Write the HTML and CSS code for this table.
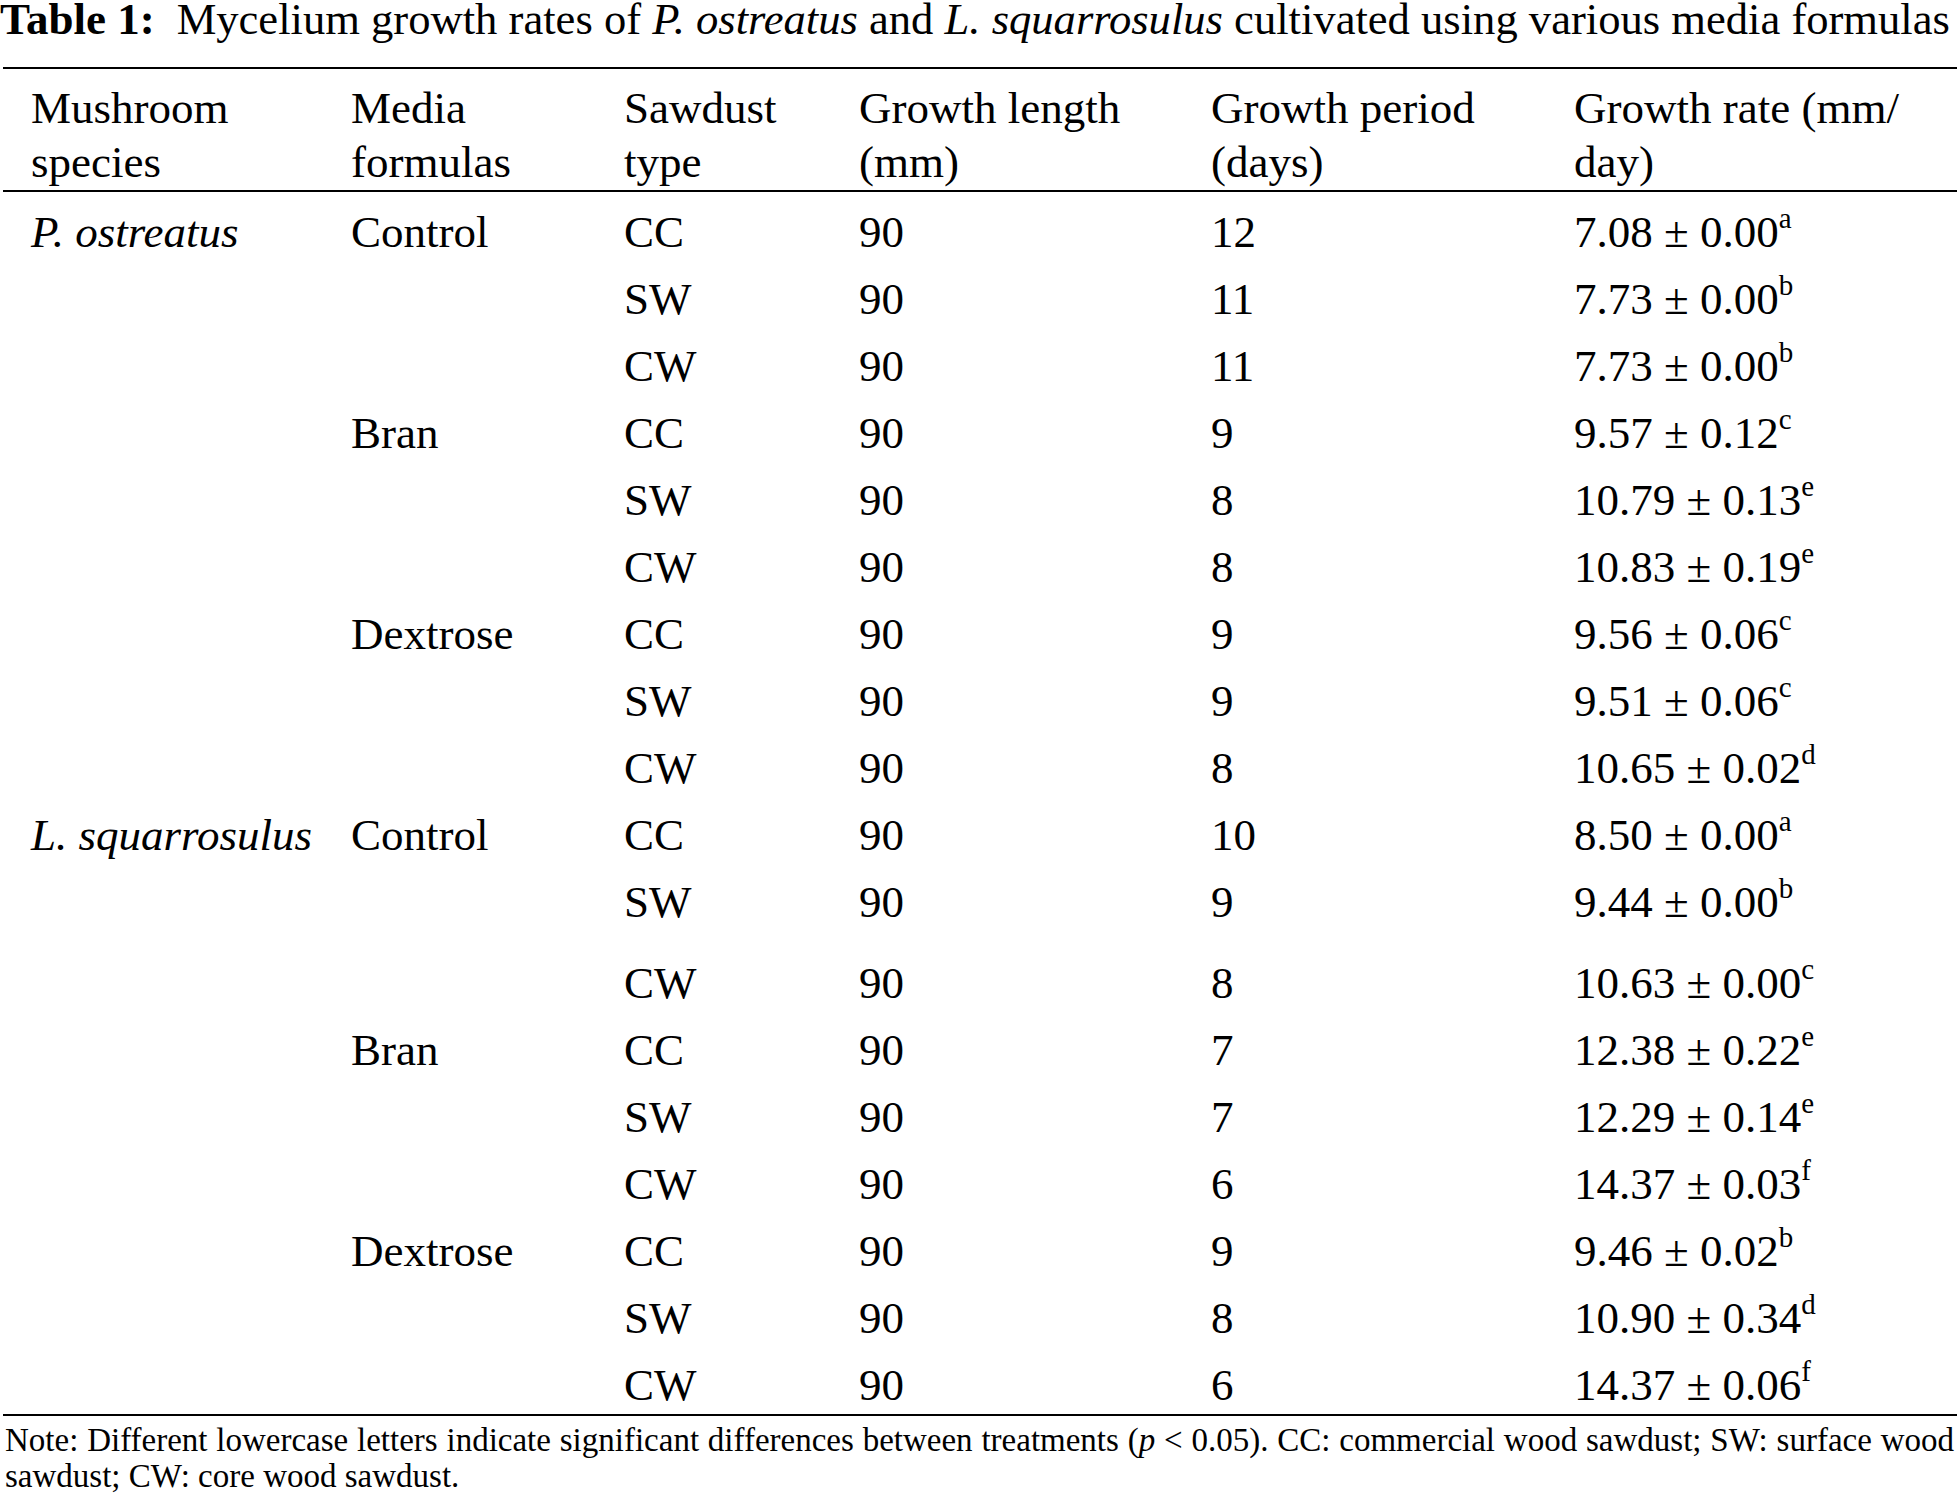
FILE: index.html
```html
<!DOCTYPE html>
<html lang="en">
<head>
<meta charset="utf-8">
<title>Table 1</title>
<link rel="stylesheet" href="styles.css">
</head>
<body>
<div class="page">
  <h1 class="caption"><span class="caption-label">Table 1:</span><span class="caption-text">Mycelium growth rates of <i>P. ostreatus</i> and <i>L. squarrosulus</i> cultivated using various media formulas</span></h1>
  <table class="data">
    <colgroup>
      <col class="c1"><col class="c2"><col class="c3"><col class="c4"><col class="c5"><col class="c6">
    </colgroup>
    <thead>
      <tr>
        <th>Mushroom<br>species</th>
        <th>Media<br>formulas</th>
        <th>Sawdust<br>type</th>
        <th>Growth length<br>(mm)</th>
        <th>Growth period<br>(days)</th>
        <th>Growth rate (mm/<br>day)</th>
      </tr>
    </thead>
    <tbody>
      <tr><td><i>P. ostreatus</i></td><td>Control</td><td>CC</td><td>90</td><td>12</td><td>7.08 ± 0.00<sup>a</sup></td></tr>
      <tr><td></td><td></td><td>SW</td><td>90</td><td>11</td><td>7.73 ± 0.00<sup>b</sup></td></tr>
      <tr><td></td><td></td><td>CW</td><td>90</td><td>11</td><td>7.73 ± 0.00<sup>b</sup></td></tr>
      <tr><td></td><td>Bran</td><td>CC</td><td>90</td><td>9</td><td>9.57 ± 0.12<sup>c</sup></td></tr>
      <tr><td></td><td></td><td>SW</td><td>90</td><td>8</td><td>10.79 ± 0.13<sup>e</sup></td></tr>
      <tr><td></td><td></td><td>CW</td><td>90</td><td>8</td><td>10.83 ± 0.19<sup>e</sup></td></tr>
      <tr><td></td><td>Dextrose</td><td>CC</td><td>90</td><td>9</td><td>9.56 ± 0.06<sup>c</sup></td></tr>
      <tr><td></td><td></td><td>SW</td><td>90</td><td>9</td><td>9.51 ± 0.06<sup>c</sup></td></tr>
      <tr><td></td><td></td><td>CW</td><td>90</td><td>8</td><td>10.65 ± 0.02<sup>d</sup></td></tr>
      <tr><td><i>L. squarrosulus</i></td><td>Control</td><td>CC</td><td>90</td><td>10</td><td>8.50 ± 0.00<sup>a</sup></td></tr>
      <tr><td></td><td></td><td>SW</td><td>90</td><td>9</td><td>9.44 ± 0.00<sup>b</sup></td></tr>
      <tr class="gap"><td></td><td></td><td>CW</td><td>90</td><td>8</td><td>10.63 ± 0.00<sup>c</sup></td></tr>
      <tr><td></td><td>Bran</td><td>CC</td><td>90</td><td>7</td><td>12.38 ± 0.22<sup>e</sup></td></tr>
      <tr><td></td><td></td><td>SW</td><td>90</td><td>7</td><td>12.29 ± 0.14<sup>e</sup></td></tr>
      <tr><td></td><td></td><td>CW</td><td>90</td><td>6</td><td>14.37 ± 0.03<sup>f</sup></td></tr>
      <tr><td></td><td>Dextrose</td><td>CC</td><td>90</td><td>9</td><td>9.46 ± 0.02<sup>b</sup></td></tr>
      <tr><td></td><td></td><td>SW</td><td>90</td><td>8</td><td>10.90 ± 0.34<sup>d</sup></td></tr>
      <tr class="last"><td></td><td></td><td>CW</td><td>90</td><td>6</td><td>14.37 ± 0.06<sup>f</sup></td></tr>
    </tbody>
  </table>
  <p class="note"><span class="note-line">Note: Different lowercase letters indicate significant differences between treatments (<i>p</i> &lt; 0.05). CC: commercial wood sawdust; SW: surface wood</span>sawdust; CW: core wood sawdust.</p>
</div>
</body>
</html>
```

FILE: styles.css
```css
html, body {
  margin: 0;
  padding: 0;
  background: #ffffff;
}

body {
  font-family: "Liberation Serif", "Times New Roman", serif;
  color: #000000;
  width: 1957px;
}

.page {
  width: 1957px;
}

.caption {
  margin: 0 0 29px 0;
  font-size: 45px;
  line-height: 38px;
  font-weight: normal;
  white-space: nowrap;
}

.caption-label {
  font-weight: bold;
  margin-right: 22px;
}

.caption-text {
  font-size: 44.6px;
}

.data {
  margin-left: 3px;
  width: 1954px;
  table-layout: fixed;
  border-collapse: collapse;
  border-top: 2px solid #000;
  border-bottom: 2px solid #000;
  font-size: 45px;
}

.c1 { width: 320px; }
.c2 { width: 273px; }
.c3 { width: 235px; }
.c4 { width: 352px; }
.c5 { width: 363px; }
.c6 { width: 411px; }

.data th,
.data td {
  text-align: left;
  vertical-align: top;
  font-weight: normal;
  line-height: 54px;
  padding: 0 0 0 28px;
  white-space: nowrap;
}

.data thead th {
  padding-top: 12px;
  padding-bottom: 1px;
  border-bottom: 2px solid #000;
}

.data tbody td {
  padding-top: 13px;
}

.data tbody tr.gap td {
  padding-top: 27px;
}

.data tbody tr.last td {
  padding-bottom: 2px;
}

.data sup {
  font-size: 29px;
  line-height: 0;
  vertical-align: 19px;
}

.note {
  margin: 6px 0 0 0;
  padding: 0 3px 0 5px;
  font-size: 33px;
  line-height: 36px;
}

.note-line {
  display: block;
  text-align: justify;
  text-align-last: justify;
}
```
